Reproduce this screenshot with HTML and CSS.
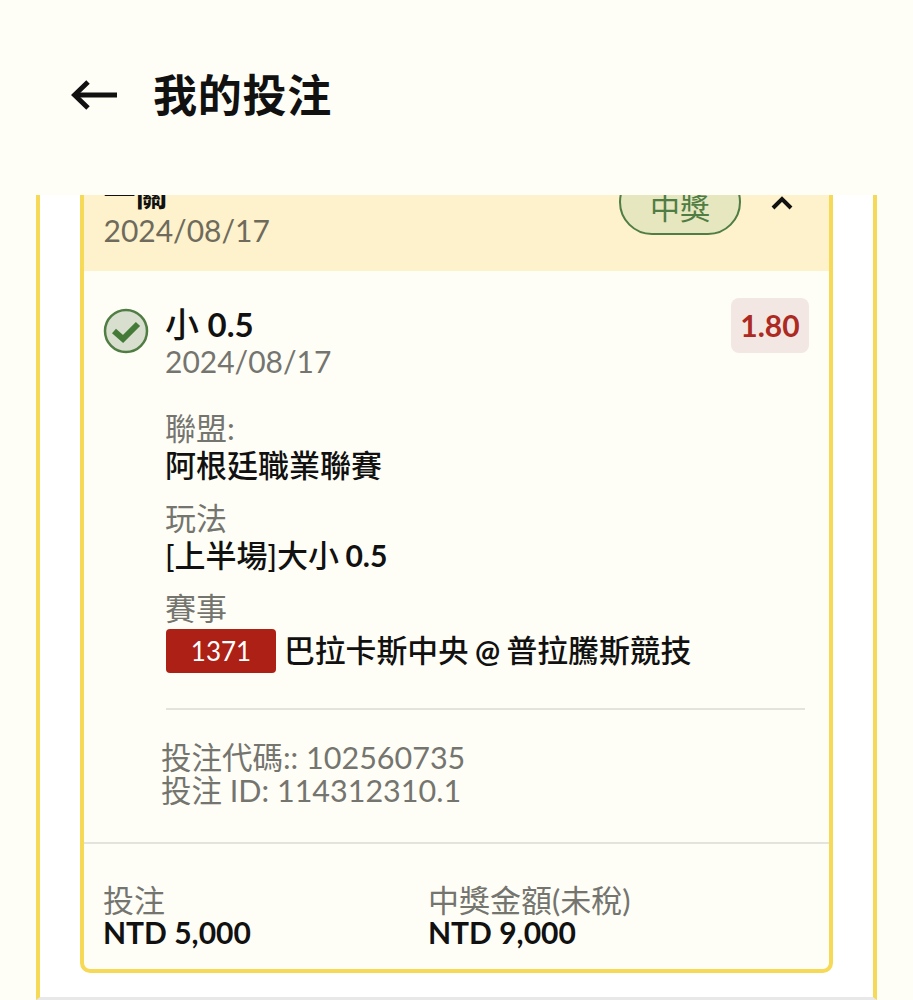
FILE: index.html
```html
<!DOCTYPE html>
<html lang="zh-Hant">
<head>
  <meta charset="UTF-8" />
  <meta name="viewport" content="width=device-width, initial-scale=1.0" />
  <title>我的投注</title>
  <link rel="stylesheet" href="styles.css">
</head>
<body>

<header class="topbar">
  <svg class="back" viewBox="0 0 48 32" width="48" height="32" fill="none" stroke="#111" stroke-width="5">
    <path d="M46 16H4" />
    <path d="M17 3 3.5 16 17 29" />
  </svg>
  <h1>我的投注</h1>
</header>

<main class="panel">
  <section class="card">
    <div class="card-head">
      <div>
        <div class="parlay">一關</div>
        <div class="head-date">2024/08/17</div>
      </div>
      <div class="head-right">
        <span class="won-pill">中獎</span>
        <svg class="chevron" viewBox="0 0 22 14" width="22" height="14" fill="none" stroke="#111" stroke-width="4">
          <path d="M2 12 11 3l9 9" />
        </svg>
      </div>
    </div>

    <div class="leg">
      <div class="leg-top">
        <svg class="check" viewBox="0 0 46 46" width="46" height="46">
          <circle cx="23" cy="23" r="21" fill="#d9dfcf" stroke="#4f7d43" stroke-width="2.5" />
          <path d="M11 23 20 31 35 16" fill="none" stroke="#437a37" stroke-width="6" />
        </svg>
        <div class="leg-title">
          <div class="pick">小 <span class="num">0.5</span></div>
          <div class="date">2024/08/17</div>
        </div>
        <div class="odds">1.80</div>
      </div>

      <div class="fields">
        <div class="field">
          <div class="sub">聯盟:</div>
          <div class="value">阿根廷職業聯賽</div>
        </div>
        <div class="field">
          <div class="sub">玩法</div>
          <div class="value">[上半場]大小 <span class="num">0.5</span></div>
        </div>
        <div class="field">
          <div class="sub">賽事</div>
          <div class="match">
            <span class="match-no">1371</span>
            <span class="value">巴拉卡斯中央 <span class="num">@</span> 普拉騰斯競技</span>
          </div>
        </div>
      </div>

      <div class="codes">
        <div>投注代碼:: 102560735</div>
        <div>投注 ID: 114312310.1</div>
      </div>
    </div>

    <div class="totals">
      <div class="total">
        <div class="sub">投注</div>
        <div class="amount">NTD 5,000</div>
      </div>
      <div class="total">
        <div class="sub">中獎金額(未稅)</div>
        <div class="amount">NTD 9,000</div>
      </div>
    </div>
  </section>
</main>

</body>
</html>
```

FILE: styles.css
```css
* {
  box-sizing: border-box;
}

html, body {
  margin: 0;
  height: 1000px;
  overflow: hidden;
}

body {
  background: #fffef6;
  color: #111;
  font-family: Lato, "Noto Sans CJK TC", sans-serif;
  display: flex;
  flex-direction: column;
}

.topbar {
  height: 195px;
  flex: none;
  display: flex;
  align-items: center;
  padding: 0 0 6px 71px;
  gap: 34px;
  background: #fffef6;
}

.topbar h1 {
  margin: 0;
  font-size: 44px;
  font-weight: 700;
  line-height: 1;
  letter-spacing: 0.75px;
}

.back {
  display: block;
}

.panel {
  flex: 1;
  min-height: 0;
  overflow: hidden;
  margin: 0 36px;
  padding: 0 40px;
  background: #fff;
  border-left: 4px solid #f6d957;
  border-right: 4px solid #f6d957;
  border-bottom: 3px solid #e8e8e8;
}

.card {
  margin-top: -30px;
  background: #fffef6;
  border: 4px solid #f6d957;
  border-radius: 10px;
}

.card-head {
  height: 102px;
  padding: 0 20px 0 19.5px;
  display: flex;
  justify-content: space-between;
  background: #fdf2cc;
}

.parlay {
  font-size: 32px;
  font-weight: 700;
  line-height: 36px;
  margin-top: 7px;
}

.head-date {
  font-size: 30px;
  line-height: 36px;
  color: #6f6b5c;
}

.head-right {
  display: flex;
  align-items: flex-start;
  gap: 30px;
  padding-right: 16px;
}

.won-pill {
  width: 122px;
  height: 66px;
  padding-top: 16px;
  text-align: center;
  font-size: 30px;
  line-height: 40px;
  color: #4f7d43;
  background: #e6e6bf;
  border: 2.5px solid #4f7d43;
  border-radius: 33px;
}

.chevron {
  margin-top: 27px;
}

.leg {
  padding: 26px 20px 36px 19px;
}

.leg-top {
  display: flex;
  align-items: flex-start;
}

.check {
  flex: none;
  margin: 11px 16px 0 0;
}

.leg-title {
  flex: 1;
}

.pick {
  font-size: 34px;
  font-weight: 500;
  line-height: 39px;
  margin-top: 7px;
}

.num {
  font-weight: 700;
  font-size: 0.97em;
}

.date {
  font-size: 30px;
  line-height: 34px;
  color: #757570;
}

.sub {
  font-size: 31px;
  line-height: 34px;
  color: #757570;
}

.odds {
  width: 78px;
  height: 55px;
  margin-top: 1px;
  line-height: 55px;
  text-align: center;
  font-size: 30px;
  font-weight: 700;
  color: #ad2a22;
  background: #f2e7e2;
  border-radius: 8px;
}

.fields {
  margin: 33px 4px 0 63px;
  padding-bottom: 35px;
  border-bottom: 2px solid #e4e4df;
}

.field {
  margin-bottom: 16px;
}

.field:last-child {
  margin-bottom: 0;
}

.field > .sub,
.field > .value {
  margin-left: -1px;
}

.value {
  font-size: 31px;
  font-weight: 500;
  line-height: 40px;
  word-spacing: -1.5px;
}

.match {
  display: flex;
  align-items: center;
  gap: 8px;
  margin-top: 4px;
}

.match .value {
  font-size: 30.8px;
}

.match-no {
  width: 110px;
  height: 44px;
  line-height: 44px;
  text-align: center;
  font-size: 26px;
  color: #fff;
  background: #ad2015;
  border-radius: 4px;
}

.codes {
  margin: 31px 0 0 58px;
  font-size: 30.5px;
  line-height: 32.5px;
  color: #757570;
}

.totals {
  display: flex;
  padding: 40px 20px 21px 19px;
  border-top: 2px solid #e4e4df;
}

.total {
  width: 325px;
}

.total .sub {
  line-height: 32px;
}

.amount {
  font-size: 30px;
  font-weight: 700;
  line-height: 32px;
}
```
